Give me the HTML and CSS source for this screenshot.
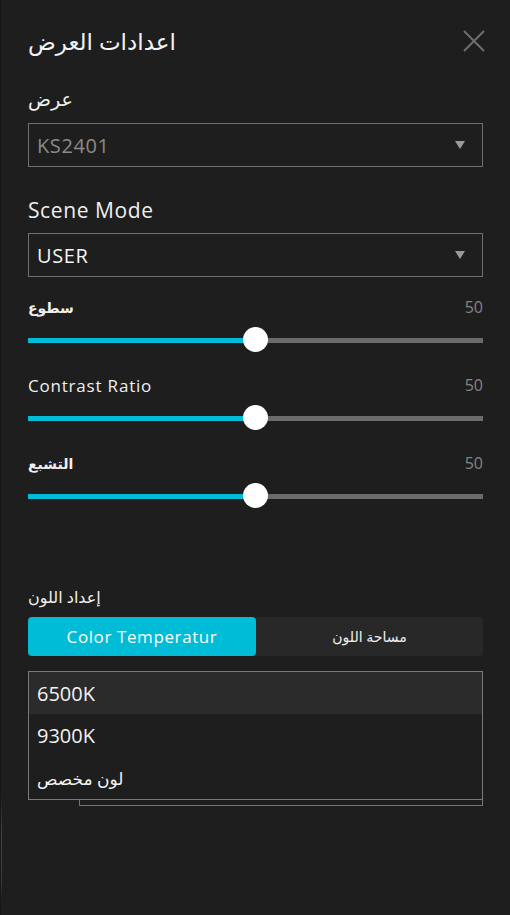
FILE: index.html
```html
<!DOCTYPE html>
<html lang="ar">
<head>
<meta charset="utf-8">
<title>اعدادات العرض</title>
<link rel="stylesheet" href="styles.css">
</head>
<body>
<div class="panel" dir="ltr">
  <div class="header">
    <div class="title" dir="rtl">اعدادات العرض</div>
    <svg class="close" width="22" height="22" viewBox="0 0 22 22" aria-hidden="true">
      <path d="M1 1 L21 21 M21 1 L1 21" stroke="#6e6e6e" stroke-width="2" fill="none"/>
    </svg>
  </div>

  <div class="label label-ar" dir="rtl">عرض</div>
  <div class="select disabled">
    <span class="select-text">KS2401</span>
    <span class="caret"></span>
  </div>

  <div class="label label-en">Scene Mode</div>
  <div class="select select-user">
    <span class="select-text">USER</span>
    <span class="caret"></span>
  </div>

  <div class="slider-row first">
    <div class="slider-head">
      <span class="slider-name ar" dir="rtl">سطوع</span>
      <span class="slider-val">50</span>
    </div>
    <div class="slider">
      <div class="fill" style="width:50.1%"></div>
      <div class="rest"></div>
      <div class="thumb" style="left:calc(50.1% - 12.5px)"></div>
    </div>
  </div>

  <div class="slider-row">
    <div class="slider-head">
      <span class="slider-name">Contrast Ratio</span>
      <span class="slider-val">50</span>
    </div>
    <div class="slider">
      <div class="fill" style="width:50.1%"></div>
      <div class="rest"></div>
      <div class="thumb" style="left:calc(50.1% - 12.5px)"></div>
    </div>
  </div>

  <div class="slider-row">
    <div class="slider-head">
      <span class="slider-name ar" dir="rtl">التشبع</span>
      <span class="slider-val">50</span>
    </div>
    <div class="slider">
      <div class="fill" style="width:50.1%"></div>
      <div class="rest"></div>
      <div class="thumb" style="left:calc(50.1% - 12.5px)"></div>
    </div>
  </div>

  <div class="label color-label" dir="rtl">إعداد اللون</div>
  <div class="tabs">
    <div class="tab active">Color Temperatur</div>
    <div class="tab tab-ar" dir="rtl">مساحة اللون</div>
  </div>

  <div class="list-wrap">
    <div class="list-under"></div>
    <div class="list">
      <div class="item hl">6500K</div>
      <div class="item mid">9300K</div>
      <div class="item ar-item"><span dir="rtl">لون مخصص</span></div>
    </div>
  </div>
</div>
<div class="edge"></div>
</body>
</html>
```

FILE: styles.css
```css
html, body {
  margin: 0;
  padding: 0;
  background: #1e1e1e;
}
body {
  width: 510px;
  height: 915px;
  overflow: hidden;
  position: relative;
  font-family: "Open Sans", "DejaVu Sans", sans-serif;
  color: #ececec;
  border-left: 1px solid #171717;
  box-sizing: border-box;
}
.edge {
  position: absolute;
  left: 0;
  top: 792px;
  width: 1px;
  height: 110px;
  background: linear-gradient(#0b1a55, #2040c0 40%, #1a36a8 80%, #0b1a55);
}
.panel {
  padding: 0 27px 0 27px;
  display: flex;
  flex-direction: column;
}
.header {
  margin-top: 26px;
  height: 30px;
  display: flex;
  align-items: center;
  justify-content: space-between;
}
.title {
  font-size: 23px;
  line-height: 30px;
  color: #f2f2f2;
}
.close {
  margin-right: -2px;
  display: block;
}
.label {
  font-size: 17px;
  line-height: 24px;
  color: #efefef;
  text-align: left;
}
.label-ar {
  margin-top: 31px;
  align-self: flex-start;
  font-size: 19px;
}
.label-en {
  margin-top: 29px;
  font-size: 21px;
  line-height: 28px;
  letter-spacing: 0.6px;
}
.select {
  height: 44px;
  box-sizing: border-box;
  border: 1px solid #6f6f6f;
  display: flex;
  align-items: center;
  justify-content: space-between;
  padding: 0 17px 0 8px;
  margin-top: 12px;
}
.select-user {
  margin-top: 9px;
}
.select-text {
  font-size: 20px;
  letter-spacing: 0.6px;
  color: #f4f4f4;
}
.disabled .select-text {
  color: #8a8a8a;
}
.caret {
  width: 0;
  height: 0;
  border-left: 5px solid transparent;
  border-right: 5px solid transparent;
  border-top: 8px solid #9a9a9a;
}
.slider-row {
  margin-top: 21px;
}
.slider-row.first {
  margin-top: 19px;
}
.slider-head {
  display: flex;
  justify-content: space-between;
  align-items: center;
  height: 22px;
}
.slider-name {
  font-size: 17px;
  letter-spacing: 0.8px;
  color: #efefef;
}
.slider-name.ar {
  font-size: 14px;
  letter-spacing: 0;
  font-weight: bold;
}
.slider-val {
  font-size: 16px;
  color: #858585;
}
.slider {
  position: relative;
  height: 26px;
  margin-top: 9px;
  display: flex;
  align-items: center;
}
.fill {
  height: 5px;
  background: #00bcd6;
}
.rest {
  flex: 1;
  height: 5px;
  background: #6b6b6b;
}
.thumb {
  position: absolute;
  top: 0;
  width: 25px;
  height: 25px;
  border-radius: 50%;
  background: #ffffff;
}
.color-label {
  margin-top: 76px;
  align-self: flex-start;
  font-size: 16px;
}
.tabs {
  margin-top: 8px;
  height: 39px;
  display: grid;
  grid-template-columns: 228px 1fr;
  background: #282828;
  border-radius: 4px;
}
.tab {
  display: flex;
  align-items: center;
  justify-content: center;
  font-size: 17px;
  letter-spacing: 0.6px;
  color: #f0f0f0;
}
.tab-ar {
  font-size: 14px;
  letter-spacing: 0;
}
.tab.active {
  background: #00bcd6;
  border-radius: 4px;
  color: #ffffff;
}
.list-wrap {
  position: relative;
  margin-top: 15px;
}
.list-under {
  position: absolute;
  left: 51px;
  right: 0;
  top: 20px;
  bottom: -6px;
  border: 1px solid #747474;
}
.list {
  position: relative;
  background: #1e1e1e;
  border: 1px solid #7a7a7a;
}
.item {
  height: 42px;
  display: flex;
  align-items: center;
  padding-left: 8px;
  font-size: 20px;
  color: #f2f2f2;
}
.item.mid {
  height: 43px;
}
.item.hl {
  background: #2b2b2b;
}
.ar-item {
  font-size: 17px;
}
```
